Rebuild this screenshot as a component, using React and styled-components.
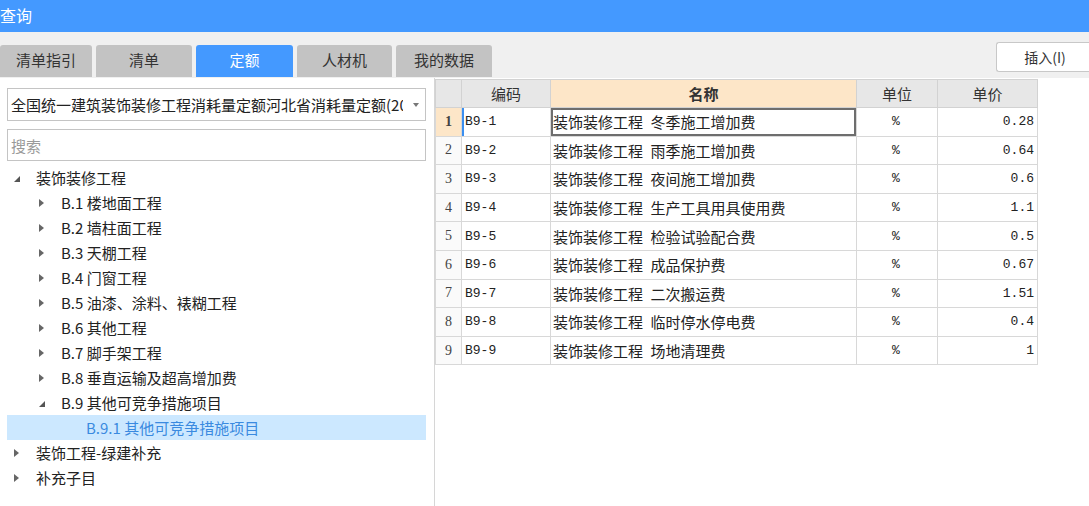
import React from 'react';
import styled, { createGlobalStyle } from 'styled-components';

const GlobalStyle = createGlobalStyle`
    html, body {
        margin: 0;
        padding: 0;
        background: #ffffff;
    }
    body {
        font-family: "Noto Sans CJK SC", "Liberation Sans", sans-serif;
    }
`;

const Page = styled.div`
    width: 1089px;
    height: 506px;
    overflow: hidden;
    display: flex;
    flex-direction: column;
    background: #fff;
`;

const TitleBar = styled.div`
    height: 32px;
    background: #4499ff;
    color: #fff;
    font-size: 16px;
    line-height: 30px;
    padding-left: 0;
`;

const TabStrip = styled.div`
    height: 46px;
    background: #f0f0f0;
    display: flex;
    align-items: flex-end;
    gap: 4px;
`;

const Tab = styled.div`
    width: ${p => p.$w}px;
    height: 32px;
    box-sizing: border-box;
    padding-bottom: 3px;
    border-radius: 3px 3px 0 0;
    background: ${p => (p.$active ? '#4499ff' : '#c3c3c3')};
    color: ${p => (p.$active ? '#fff' : '#333')};
    font-size: 15px;
    display: flex;
    align-items: center;
    justify-content: center;
    margin-bottom: 1px;
`;

const InsertButton = styled.div`
    margin-left: auto;
    align-self: flex-start;
    margin-top: 10px;
    width: 93px;
    height: 30px;
    box-sizing: border-box;
    padding-left: 4px;
    border: 1px solid #c8c8c8;
    border-right: none;
    border-radius: 3px 0 0 3px;
    background: #fff;
    color: #333;
    font-size: 14px;
    display: flex;
    align-items: center;
    justify-content: center;
`;

const Body = styled.div`
    flex: 1;
    display: flex;
    min-height: 0;
`;

const LeftPanel = styled.div`
    width: 435px;
    border-right: 1px solid #d6d6d6;
    padding: 10px 0 0 0;
    box-sizing: border-box;
    display: flex;
    flex-direction: column;
`;

const Select = styled.div`
    margin: 0 8px 0 7px;
    height: 33px;
    box-sizing: border-box;
    border: 1px solid #c4c4c4;
    display: flex;
    align-items: center;
    padding: 0 6px 0 3px;
    font-size: 15px;
    color: #222;
`;

const SelectText = styled.span`
    flex: 1;
    white-space: nowrap;
    overflow: hidden;
`;

const Caret = styled.span`
    width: 0;
    height: 0;
    margin-left: 10px;
    border-left: 3px solid transparent;
    border-right: 3px solid transparent;
    border-top: 4px solid #777;
`;

const Search = styled.div`
    margin: 8px 8px 0 7px;
    height: 32px;
    box-sizing: border-box;
    border: 1px solid #c4c4c4;
    display: flex;
    align-items: center;
    padding-left: 3px;
    font-size: 15px;
    color: #9a9a9a;
`;

const Tree = styled.div`
    margin: 4px 8px 0 7px;
    display: flex;
    flex-direction: column;
`;

const TreeRow = styled.div`
    height: 25px;
    display: flex;
    align-items: center;
    padding-left: ${p => 7 + p.$level * 25}px;
    background: ${p => (p.$selected ? '#cce8ff' : 'transparent')};
    color: ${p => (p.$selected ? '#3a8ae0' : '#222')};
    font-size: 15px;
    white-space: nowrap;
`;

const ArrowBox = styled.span`
    width: 22px;
    display: flex;
    align-items: center;
`;

const Collapsed = styled.span`
    width: 0;
    height: 0;
    border-top: 4px solid transparent;
    border-bottom: 4px solid transparent;
    border-left: 5px solid #666;
`;

const Expanded = styled.span`
    width: 0;
    height: 0;
    margin-top: 2px;
    border-left: 6px solid transparent;
    border-bottom: 6px solid #555;
`;

const RightPanel = styled.div`
    flex: 1;
    padding-top: 1px;
`;

const Grid = styled.table`
    border-collapse: collapse;
    table-layout: fixed;
    width: 602px;
`;

const Th = styled.th`
    height: 27px;
    padding: 0;
    border: 1px solid #d2d2d2;
    background: ${p => (p.$hl ? '#fde6c8' : '#e7e7e7')};
    font-size: 15px;
    font-weight: ${p => (p.$bold ? 700 : 400)};
    color: #333;
    text-align: center;
`;

const Td = styled.td`
    height: 27.6px;
    padding: 0 ${p => (p.$align === 'right' ? 3 : 2)}px 0 ${p => (p.$align === 'center' ? 0 : p.$mono ? 3 : 2)}px;
    border: 1px solid #d8d8d8;
    font-family: ${p => (p.$mono ? '"Liberation Mono", monospace' : '"Noto Sans CJK SC", sans-serif')};
    font-size: ${p => (p.$mono ? '13px' : '15px')};
    color: #222;
    text-align: ${p => p.$align || 'left'};
    white-space: nowrap;
    overflow: hidden;
    background: ${p => (p.$bg ? p.$bg : '#fff')};
    box-shadow: ${p =>
        p.$focus ? 'inset 0 0 0 2px #6e6e6e' : p.$mark ? 'inset 2px 0 0 #3b8ff0' : 'none'};
`;

const NumCell = styled(Td)`
    text-align: center;
    font-weight: ${p => (p.$current ? 700 : 400)};
    font-family: "Liberation Serif", serif;
    font-size: 14px;
    color: #444;
    padding: 0;
`;

const tabs = [
    { label: '清单指引', w: 92 },
    { label: '清单', w: 96 },
    { label: '定额', w: 97, active: true },
    { label: '人材机', w: 95 },
    { label: '我的数据', w: 96 },
];

const tree = [
    { label: '装饰装修工程', level: 0, open: true },
    { label: 'B.1 楼地面工程', level: 1 },
    { label: 'B.2 墙柱面工程', level: 1 },
    { label: 'B.3 天棚工程', level: 1 },
    { label: 'B.4 门窗工程', level: 1 },
    { label: 'B.5 油漆、涂料、裱糊工程', level: 1 },
    { label: 'B.6 其他工程', level: 1 },
    { label: 'B.7 脚手架工程', level: 1 },
    { label: 'B.8 垂直运输及超高增加费', level: 1 },
    { label: 'B.9 其他可竞争措施项目', level: 1, open: true },
    { label: 'B.9.1 其他可竞争措施项目', level: 2, leaf: true, selected: true },
    { label: '装饰工程-绿建补充', level: 0 },
    { label: '补充子目', level: 0 },
];

const rows = [
    ['B9-1', '冬季施工增加费', '0.28'],
    ['B9-2', '雨季施工增加费', '0.64'],
    ['B9-3', '夜间施工增加费', '0.6'],
    ['B9-4', '生产工具用具使用费', '1.1'],
    ['B9-5', '检验试验配合费', '0.5'],
    ['B9-6', '成品保护费', '0.67'],
    ['B9-7', '二次搬运费', '1.51'],
    ['B9-8', '临时停水停电费', '0.4'],
    ['B9-9', '场地清理费', '1'],
];

const App = () => {
    return (
        <Page>
            <GlobalStyle />
            <TitleBar>查询</TitleBar>
            <TabStrip>
                {tabs.map(t => (
                    <Tab key={t.label} $w={t.w} $active={t.active}>{t.label}</Tab>
                ))}
                <InsertButton>插入(I)</InsertButton>
            </TabStrip>
            <Body>
                <LeftPanel>
                    <Select>
                        <SelectText>全国统一建筑装饰装修工程消耗量定额河北省消耗量定额(2012)</SelectText>
                        <Caret />
                    </Select>
                    <Search>搜索</Search>
                    <Tree>
                        {tree.map(n => (
                            <TreeRow key={n.label} $level={n.level} $selected={n.selected}>
                                <ArrowBox>
                                    {n.leaf ? null : n.open ? <Expanded /> : <Collapsed />}
                                </ArrowBox>
                                {n.label}
                            </TreeRow>
                        ))}
                    </Tree>
                </LeftPanel>
                <RightPanel>
                    <Grid>
                        <colgroup>
                            <col style={{ width: 26 }} />
                            <col style={{ width: 89 }} />
                            <col style={{ width: 306 }} />
                            <col style={{ width: 81 }} />
                            <col style={{ width: 100 }} />
                        </colgroup>
                        <thead>
                            <tr>
                                <Th />
                                <Th>编码</Th>
                                <Th $hl $bold>名称</Th>
                                <Th>单位</Th>
                                <Th>单价</Th>
                            </tr>
                        </thead>
                        <tbody>
                            {rows.map((r, i) => (
                                <tr key={r[0]}>
                                    <NumCell $current={i === 0} $bg={i === 0 ? '#fde6c8' : '#fafafa'}>{i + 1}</NumCell>
                                    <Td $mono $mark={i === 0}>{r[0]}</Td>
                                    <Td $align="left" $focus={i === 0}>装饰装修工程{'\u2002'}{r[1]}</Td>
                                    <Td $mono $align="center">%</Td>
                                    <Td $mono $align="right">{r[2]}</Td>
                                </tr>
                            ))}
                        </tbody>
                    </Grid>
                </RightPanel>
            </Body>
        </Page>
    );
};

export default App;
